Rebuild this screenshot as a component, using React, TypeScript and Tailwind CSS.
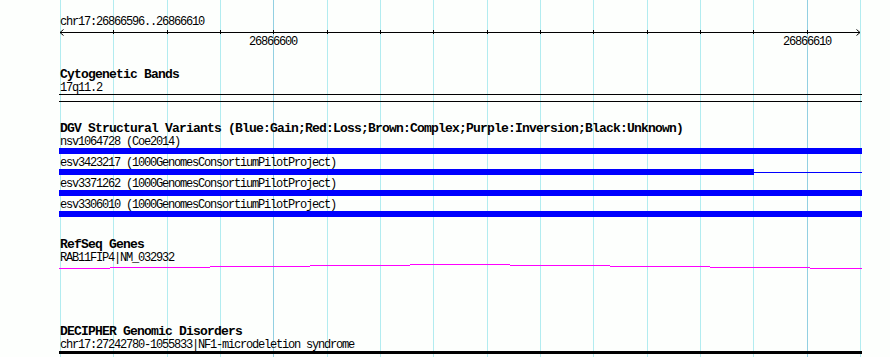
import React from "react";

// base 26866596 sits at x=60, one base = 800/15 px
const GRID = Array.from({ length: 16 }, (_, i) => ({
  x: Math.round(60 + (i * 800) / 15),
  major: i === 4 || i === 14,
}));

const steps: [number, number, number][] = [
  [0, 51, 4],
  [51, 151, 3],
  [151, 251, 2],
  [251, 351, 1],
  [351, 451, 0],
  [451, 551, 1],
  [551, 651, 2],
  [651, 751, 3],
  [751, 803, 4],
];

const dgvRows = [
  { label: "nsv1064728 (Coe2014)", full: true },
  { label: "esv3423217 (1000GenomesConsortiumPilotProject)", full: false },
  { label: "esv3371262 (1000GenomesConsortiumPilotProject)", full: true },
  { label: "esv3306010 (1000GenomesConsortiumPilotProject)", full: true },
];

function Small({ children, className = "" }: { children: React.ReactNode; className?: string }) {
  return (
    <div className={`h-[12px] whitespace-nowrap text-[12px] leading-[12px] tracking-[-1.2px] ${className}`}>
      {children}
    </div>
  );
}

function Title({ children, className = "" }: { children: React.ReactNode; className?: string }) {
  return (
    <div className={`h-[13px] whitespace-nowrap text-[13px] font-bold leading-[13px] tracking-[-0.8px] ${className}`}>
      {children}
    </div>
  );
}

export default function App() {
  return (
    <div className="relative h-[357px] w-[890px] overflow-hidden bg-[#fdfffd] font-['Liberation_Mono',monospace] text-black">
      {/* grid */}
      <div className="absolute inset-0">
        {GRID.map((g) => (
          <div
            key={g.x}
            className={`absolute top-0 h-full w-px ${g.major ? "bg-[#92d0e2]" : "bg-[#b2ecf0]"}`}
            style={{ left: g.x }}
          />
        ))}
      </div>

      <div className="relative flex w-[862px] flex-col pl-[59px]">
        {/* ruler */}
        <Small className="mt-[16px] h-[11px] pl-px">chr17:26866596..26866610</Small>
        <svg width="803" height="8" className="block">
          <line x1="1" y1="4.5" x2="801" y2="4.5" stroke="#000" />
          <path d="M1 4.5 L4.5 1.5 M1 4.5 L4.5 7.5 M801 4.5 L797.5 1.5 M801 4.5 L797.5 7.5" stroke="#000" fill="none" />
          {GRID.slice(1, 15).map((g) => (
            <line key={g.x} x1={g.x - 59 + 0.5} y1="2" x2={g.x - 59 + 0.5} y2="6" stroke="#000" />
          ))}
        </svg>
        <div className="relative h-[12px]">
          <Small className="absolute left-[190px] top-0">26866600</Small>
          <Small className="absolute left-[724px] top-0">26866610</Small>
        </div>

        {/* cytogenetic bands */}
        <Title className="mt-[20px] pl-px">Cytogenetic Bands</Title>
        <Small className="mt-[1px] pl-px">17q11.2</Small>
        <div className="h-px w-[803px] bg-black" />
        <div className="mt-[6px] h-px w-[803px] bg-black" />

        {/* DGV */}
        <Title className="mt-[20px] pl-px">
          DGV Structural Variants (Blue:Gain;Red:Loss;Brown:Complex;Purple:Inversion;Black:Unknown)
        </Title>
        <div className="mt-[1px] flex flex-col gap-[3px]">
          {dgvRows.map((r) => (
            <div key={r.label} className="flex flex-col">
              <Small className="pl-px">{r.label}</Small>
              {r.full ? (
                <div className="h-[6px] w-[803px] bg-[#0000ff]" />
              ) : (
                <div className="flex h-[6px] w-[803px] items-center">
                  <div className="h-[6px] w-[695px] bg-[#0000ff]" />
                  <div className="h-px flex-1 bg-[#0000ff]" />
                </div>
              )}
            </div>
          ))}
        </div>

        {/* RefSeq */}
        <Title className="mt-[21px] pl-px">RefSeq Genes</Title>
        <Small className="mt-[1px] pl-px">RAB11FIP4|NM_032932</Small>
        <svg width="803" height="5" className="block">
          {steps.map(([a, b, y]) => (
            <line key={a} x1={a} y1={y + 0.5} x2={b} y2={y + 0.5} stroke="#ff00ff" />
          ))}
        </svg>

        {/* DECIPHER */}
        <Title className="mt-[56px] pl-px">DECIPHER Genomic Disorders</Title>
        <Small className="mt-[1px] h-[11px] pl-px">chr17:27242780-1055833|NF1-microdeletion syndrome</Small>
        <div className="h-[3px] w-[803px] bg-black" />
      </div>
    </div>
  );
}
